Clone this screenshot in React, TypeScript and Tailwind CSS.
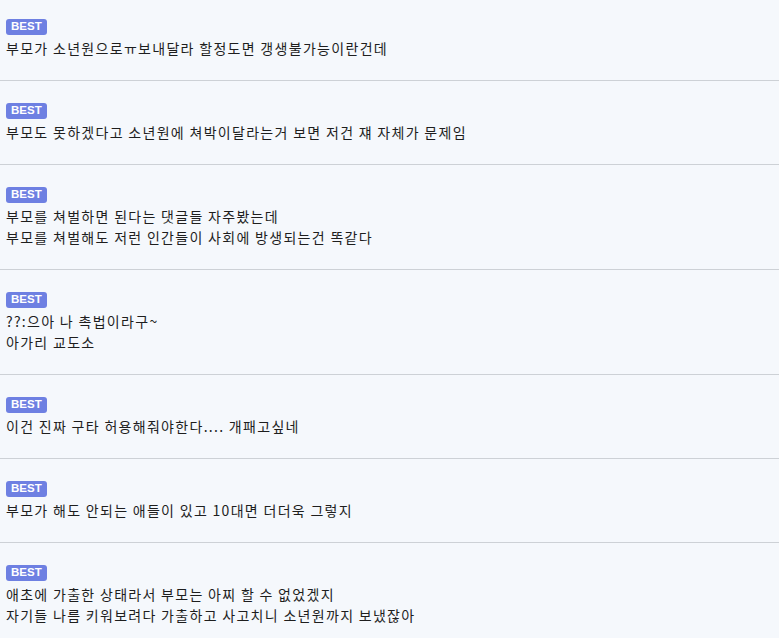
const comments = [
  ['부모가 소년원으로ㅠ보내달라 할정도면 갱생불가능이란건데'],
  ['부모도 못하겠다고 소년원에 쳐박이달라는거 보면 저건 쟤 자체가 문제임'],
  ['부모를 쳐벌하면 된다는 댓글들 자주봤는데', '부모를 쳐벌해도 저런 인간들이 사회에 방생되는건 똑같다'],
  ['??:으아 나 촉법이라구~', '아가리 교도소'],
  ['이건 진짜 구타 허용해줘야한다.... 개패고싶네'],
  ['부모가 해도 안되는 애들이 있고 10대면 더더욱 그렇지'],
  ['애초에 가출한 상태라서 부모는 아찌 할 수 없었겠지', '자기들 나름 키워보려다 가출하고 사고치니 소년원까지 보냈잖아'],
];

export default function App() {
  return (
    <div className="h-screen w-full overflow-hidden bg-[#f5f8fc] font-['Noto_Sans_CJK_KR','Noto_Sans',sans-serif]">
      {comments.map((lines, i) => (
        <div
          key={i}
          className={`border-b border-[#cdd1d6] px-[6px] pb-[21px] ${i === 0 ? 'pt-[19px]' : 'pt-[22px]'}`}
        >
          <div className="flex h-4 w-fit items-center rounded-[3px] bg-[#6e80e2] px-[5px] font-['Liberation_Sans',sans-serif] text-[11.5px] font-bold leading-none text-white">
            BEST
          </div>
          <div className="mt-[3px] text-[14px] leading-[21px] tracking-[1.3px] text-[#1e1e1e]">
            {lines.map((line) => (
              <p key={line}>{line}</p>
            ))}
          </div>
        </div>
      ))}
    </div>
  );
}
